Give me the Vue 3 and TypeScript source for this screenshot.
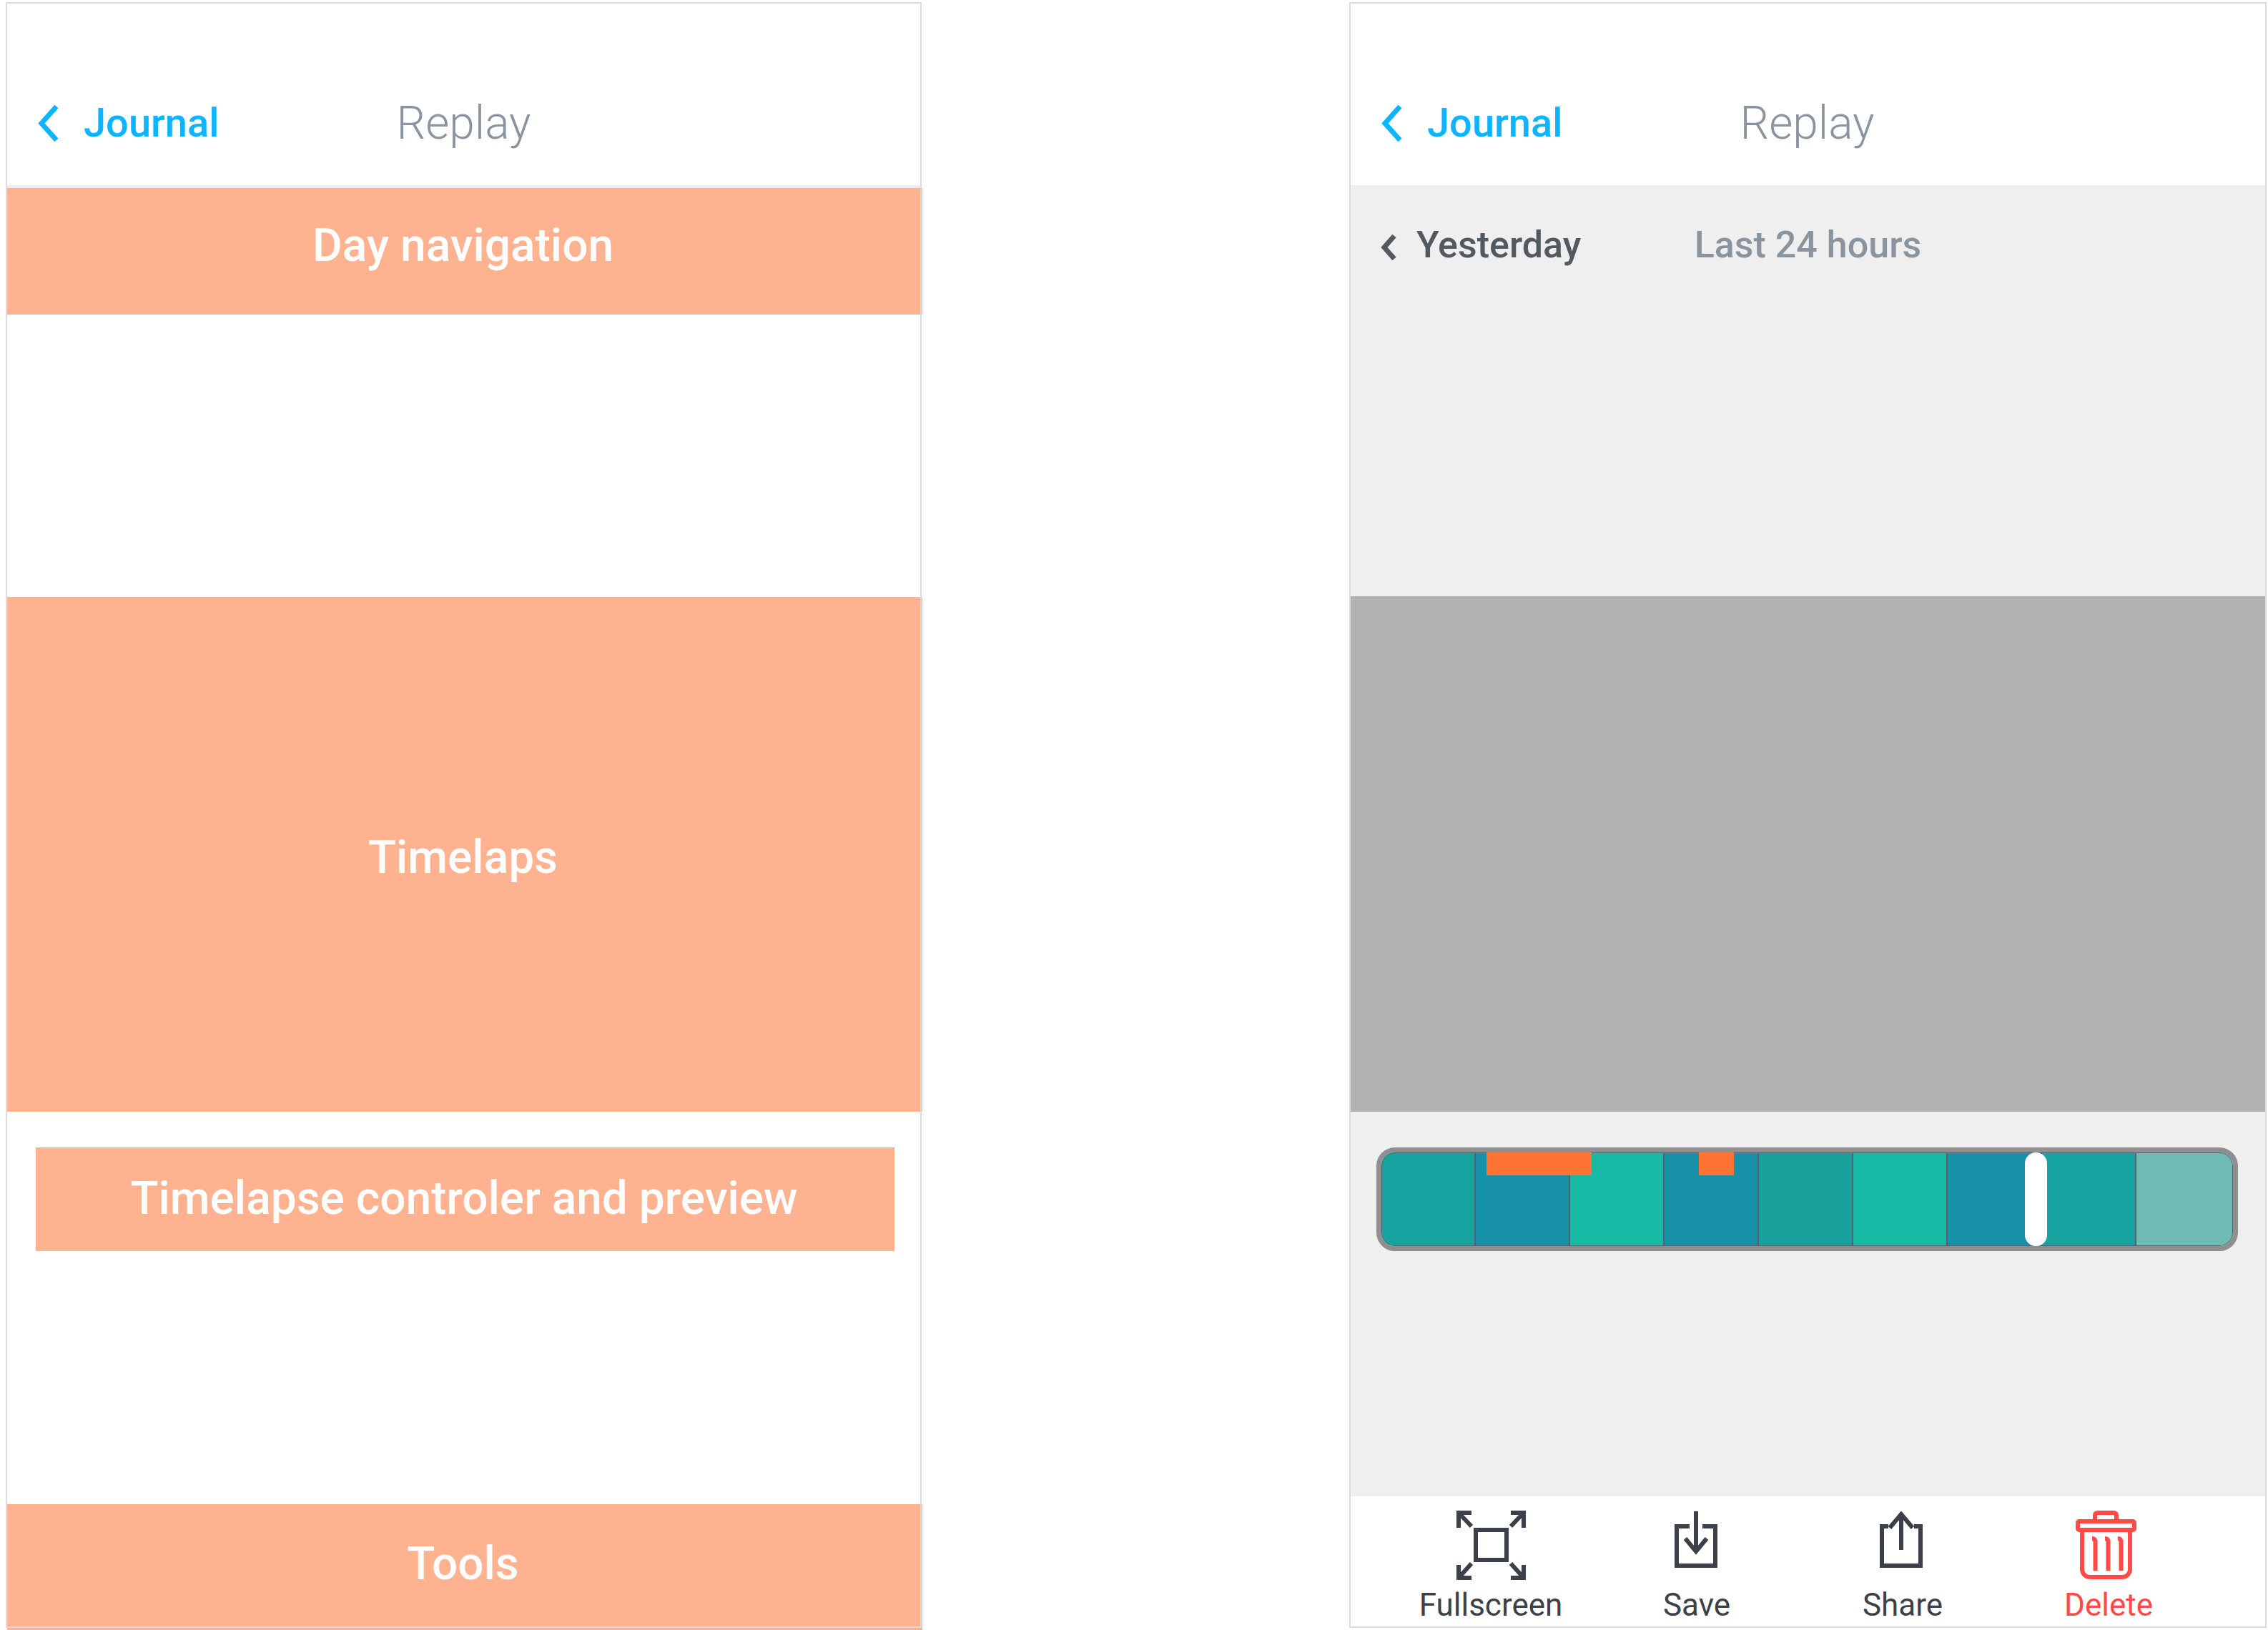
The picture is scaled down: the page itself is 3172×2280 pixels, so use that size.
<script setup lang="ts">
const segments = ['#17a39f', '#1791a7', '#18baa5', '#1791a7', '#17a09c', '#18baa5', '#1791a7', '#17a39f', '#6fbab5']
</script>

<template>
  <div class="page">
    <section class="phone phone--wire">
      <header class="topbar topbar--line">
        <svg class="back" viewBox="0 0 31 51"><path d="M27 2 6 25.5 27 49" /></svg>
        <span class="journal">Journal</span>
        <span class="replay">Replay</span>
      </header>
      <div class="block block--nav">Day navigation</div>
      <div class="block block--timelapse">Timelaps</div>
      <div class="block block--control">Timelapse controler and preview</div>
      <div class="block block--tools">Tools</div>
    </section>

    <section class="phone phone--design">
      <header class="topbar">
        <svg class="back" viewBox="0 0 31 51"><path d="M27 2 6 25.5 27 49" /></svg>
        <span class="journal">Journal</span>
        <span class="replay">Replay</span>
      </header>
      <div class="day-nav">
        <svg class="day-back" viewBox="0 0 22 36"><path d="M19 2 5 18l14 16" /></svg>
        <span class="yesterday">Yesterday</span>
        <span class="last">Last 24 hours</span>
      </div>
      <div class="preview"></div>
      <div class="track-area">
        <div class="track">
          <div v-for="(c, i) in segments" :key="i" class="segment" :style="{ background: c }"></div>
          <div class="event event--long"></div>
          <div class="event event--short"></div>
          <div class="handle"></div>
        </div>
      </div>
      <nav class="tools">
        <div class="tool">
          <svg class="icon" width="97" height="97" viewBox="0 0 97 97">
            <rect x="27" y="27" width="43" height="42" />
            <path d="M3 24V3h18M3 3l18 19M94 24V3H76M94 3 76 22M3 76v18h18M3 94l18-20M94 76v18H76M94 94 76 74" />
          </svg>
          <span>Fullscreen</span>
        </div>
        <div class="tool">
          <svg class="icon icon--save" width="60" height="79" viewBox="0 0 60 79">
            <path d="M21 21H3v55h54V21H39M30 0v56M15 38l15 18 15-18" />
          </svg>
          <span>Save</span>
        </div>
        <div class="tool">
          <svg class="icon icon--share" width="60" height="79" viewBox="0 0 60 79">
            <path d="M12 21H3v55h54V21h-9M30 5v49M14 23 30 4l16 19" />
          </svg>
          <span>Share</span>
        </div>
        <div class="tool tool--danger">
          <svg class="icon icon--trash" width="85" height="96" viewBox="0 0 85 96">
            <rect x="3" y="15" width="79" height="12" rx="2" />
            <path d="M27 14V7q0-4 4-4h22q4 0 4 4v7M9 28v54a11 11 0 0 0 11 11h45a11 11 0 0 0 11-11V28" />
            <path d="M23 39q4.500 0 4.500 5v40M41 39q4.500 0 4.500 5v40M59 39q4.500 0 4.500 5v40" />
          </svg>
          <span>Delete</span>
        </div>
      </nav>
    </section>
  </div>
</template>

<style>
html,
body {
  background: #fff;
}
</style>

<style scoped>
.page {
  display: flex;
  justify-content: space-between;
  width: 3172px;
  height: 2280px;
  overflow: hidden;
  box-sizing: border-box;
  padding: 3px 2px 0 8px;
  font-family: Roboto, "Liberation Sans", sans-serif;
}

.phone {
  position: relative;
  width: 1281px;
  height: 2274px;
  box-sizing: border-box;
  border: 2px solid transparent;
  display: flex;
  flex-direction: column;
}

/* the frame sits on top, the orange blocks run under it */
.phone::after {
  content: "";
  position: absolute;
  inset: -2px;
  border: 2px solid #dcdcdc;
  pointer-events: none;
}

.phone--design {
  width: 1283px;
  background: #efefef;
}

.topbar {
  flex: none;
  height: 254px;
  box-sizing: border-box;
  background: #fff;
  position: relative;
  display: flex;
  align-items: center;
  padding: 80px 0 0 42px;
}

.topbar--line {
  height: 258px;
  border-bottom: 4px solid #eeeeee;
}

.back {
  width: 31px;
  height: 51px;
  fill: none;
  stroke: #0db4ff;
  stroke-width: 7;
}

.journal {
  margin-left: 34px;
  font-size: 56px;
  font-weight: 500;
  color: #0db4ff;
}

.replay {
  position: absolute;
  left: 0;
  right: 0;
  top: 135px;
  text-align: center;
  font-size: 64px;
  line-height: 66px;
  font-weight: 300;
  color: #8a949e;
}

.phone--design .replay {
  right: 2px;
}

.block {
  flex: none;
  box-sizing: border-box;
  display: flex;
  align-items: center;
  justify-content: center;
  background: #feb290;
  color: #fff;
  font-size: 64px;
  font-weight: 500;
}

.block--nav {
  height: 177px;
  margin-right: -3px;
  padding: 0 5px 16px 0;
}

.block--timelapse {
  height: 720px;
  margin: 395px -3px 0 0;
  padding: 9px 5px 0 0;
}

.block--control {
  height: 145px;
  margin: 50px 36px 0 40px;
  padding: 0 3px 2px 0;
}

.block--tools {
  height: 176px;
  margin: 354px -3px 0 0;
  padding: 0 5px 10px 0;
}

.day-nav {
  flex: none;
  height: 575px;
  box-sizing: border-box;
  position: relative;
  display: flex;
  align-items: flex-start;
  padding: 53px 0 0 42px;
}

.day-back {
  width: 22px;
  height: 36px;
  margin-top: 16px;
  fill: none;
  stroke: #52595f;
  stroke-width: 7;
}

.yesterday {
  margin-left: 28px;
  font-size: 52px;
  font-weight: 500;
  color: #52595f;
}

.last {
  position: absolute;
  left: 0;
  right: 0;
  top: 53px;
  text-align: center;
  font-size: 52px;
  font-weight: 500;
  color: #8a949e;
}

.preview {
  flex: none;
  height: 721px;
  background: #b2b2b2;
}

.track-area {
  flex: 1;
  padding: 50px 38px 0 36px;
}

.track {
  position: relative;
  height: 145px;
  box-sizing: border-box;
  border: 7px solid #8f8f8f;
  border-radius: 26px;
  overflow: hidden;
  display: flex;
}

.track::after {
  content: "";
  position: absolute;
  inset: 0;
  border: 1px solid #55606a;
  border-radius: 19px;
}

.segment {
  flex: 0 0 132px;
  box-sizing: border-box;
  border-right: 2px solid #56626a;
}

.segment:nth-child(9) {
  flex: 1;
  border-right: 0;
}

.event {
  position: absolute;
  top: 0;
  height: 32px;
  background: #ff7433;
  z-index: 1;
}

.event--long {
  left: 147px;
  width: 147px;
}

.event--short {
  left: 444px;
  width: 49px;
}

.handle {
  position: absolute;
  top: 0;
  bottom: 0;
  left: 900px;
  width: 31px;
  border-radius: 16px;
  background: #fff;
  z-index: 1;
}

.tools {
  flex: none;
  height: 182px;
  box-sizing: border-box;
  background: #fff;
  display: flex;
  padding: 20px 0 0 52px;
}

.tool {
  width: 288px;
  height: 162px;
  display: flex;
  flex-direction: column;
  align-items: center;
  font-size: 44px;
  color: #3c4149;
}

.tool span {
  position: absolute;
  margin-top: 106px;
  line-height: 52px;
}

.icon {
  flex: none;
  fill: none;
  stroke: currentColor;
  stroke-width: 6;
}

.icon--save {
  margin: 1px 0 0 -3px;
}

.icon--share {
  margin: 1px 0 0 -5px;
}

.icon--trash {
  margin-left: -8px;
}

.tool--danger {
  color: #ff4a47;
}
</style>
